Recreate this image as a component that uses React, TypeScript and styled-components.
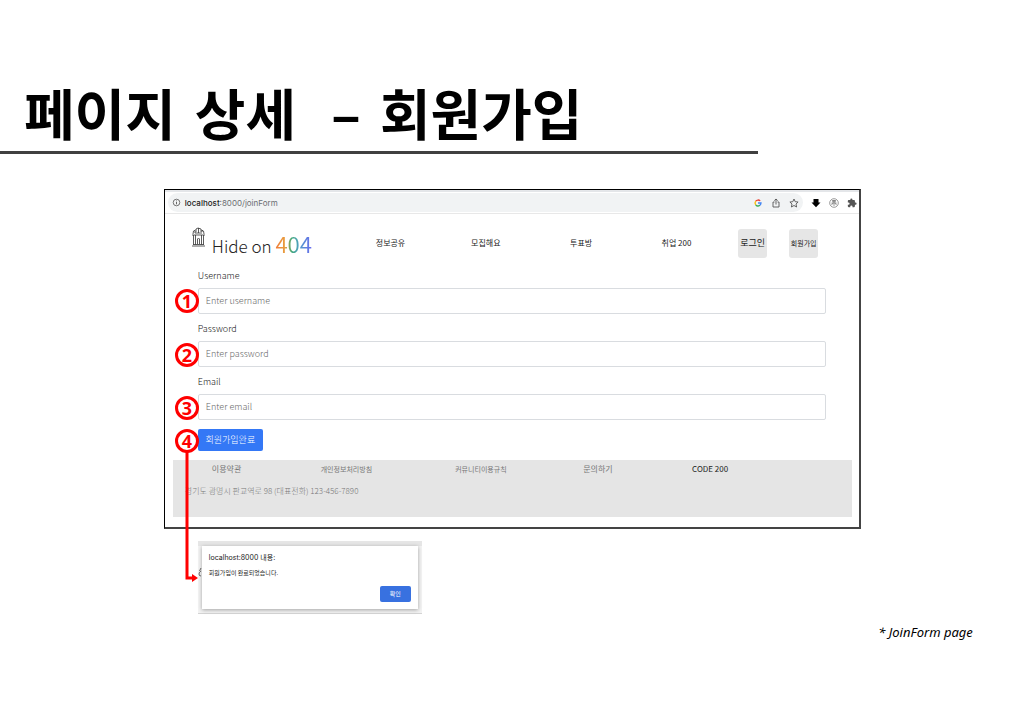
import React from "react";
import styled, { createGlobalStyle } from "styled-components";

const Global = createGlobalStyle`
  *, *::before, *::after { box-sizing: border-box; }
  body { margin: 0; background: #fff; color: #000; font-family: "Noto Sans CJK KR", sans-serif; }
`;

const hand = `"Noto Sans CJK KR", sans-serif`;

const Slide = styled.main`
  padding: 73px 0 84px;
  overflow: hidden;
`;

const Title = styled.h1`
  display: flex;
  gap: 19px;
  margin: 0;
  padding-left: 24px;
  height: 78px;
  font-size: 55px;
  line-height: 76px;
  font-weight: 700;
  white-space: pre;
`;

const Dash = styled.span`
  padding-left: 16px;
`;

const Rule = styled.hr`
  width: 74%;
  height: 3px;
  margin: 0 0 35px;
  border: 0;
  background: #404040;
`;

const Frame = styled.section`
  position: relative;
  min-width: 640px;
  margin: 0 calc(16% - 1px) 0 16%;
  border: 1px solid #000;
  border-right: 2px solid #444;
  border-bottom: 2px solid #444;
`;

const AddressBar = styled.div`
  display: flex;
  align-items: center;
  gap: 8px;
  height: 24px;
  padding: 0 2px 0 3px;
  border-top: 2px solid #e4e6e9;
  border-bottom: 1px solid #e8e8e8;
`;

const Address = styled.div`
  flex: 1;
  display: flex;
  align-items: center;
  gap: 4px;
  height: 19px;
  padding: 0 4px;
  border-radius: 10px;
  background: #f1f3f4;
  color: #6b6e72;
  font: 8px/12px Inter, sans-serif;
  b { color: #222; font-weight: 500; }
`;

const AddressText = styled.span`
  flex: 1;
`;

const ToolIcons = styled.span`
  display: flex;
  align-items: center;
  gap: 8px;
`;

const Icon = styled.svg`
  display: block;
  flex: none;
`;

const Nav = styled.nav`
  display: flex;
  align-items: center;
  height: 56px;
  padding: 2px 41px 0 26px;
`;

const Logo = styled.a`
  display: flex;
  align-items: flex-start;
  gap: 6px;
  flex: 0 0 152px;
  color: #222;
  text-decoration: none;
  font: 300 17px/26px ${hand};
  white-space: nowrap;
`;

const LogoText = styled.span`
  padding-top: 3px;
`;

const Rainbow = styled.span`
  font-size: 22px;
  font-weight: 400;
  background: linear-gradient(90deg, #f07838, #e8a040 28%, #40a878 45%, #50a0c8 65%, #6a68f0);
  -webkit-background-clip: text;
  background-clip: text;
  color: transparent;
`;

const NavLinks = styled.div`
  flex: 1;
  display: grid;
  grid-template-columns: repeat(4, 1fr);
`;

const NavLink = styled.a`
  color: #222;
  font: 8px/12px ${hand};
  text-align: center;
  text-decoration: none;
`;

const NavButtons = styled.div`
  display: flex;
  gap: 22px;
  padding-left: 14px;
`;

const NavButton = styled.button<{ $small?: boolean }>`
  width: 29px;
  height: 29px;
  padding: 0;
  border: 0;
  border-radius: 3px;
  background: #e6e6e6;
  color: #222;
  font: ${(p) => (p.$small ? 7 : 9)}px/12px ${hand};
  white-space: nowrap;
`;

const Form = styled.form`
  padding: 0 33px;
`;

const Field = styled.div`
  position: relative;
  height: 53px;
`;

const Label = styled.label`
  display: block;
  height: 18px;
  color: #111;
  font: 300 9px/12px ${hand};
`;

const Input = styled.input`
  display: block;
  width: 100%;
  height: 26px;
  padding: 0 7px 2px;
  border: 1px solid #d9dce0;
  border-radius: 2px;
  background: #fff;
  font: 300 9px/12px ${hand};
  &::placeholder { color: #666; opacity: 1; }
`;

const SubmitRow = styled.div`
  position: relative;
  height: 31px;
`;

const Submit = styled.button`
  display: block;
  width: 65px;
  height: 22px;
  padding: 0;
  border: 0;
  border-radius: 2px;
  background: #3478f6;
  color: #fff;
  font: 300 9px/12px ${hand};
`;

const Marker = styled.span<{ $top: number }>`
  position: absolute;
  z-index: 2;
  left: -23px;
  top: ${(p) => p.$top}px;
  width: 24px;
  height: 24px;
  border: 3px solid #f00;
  border-radius: 50%;
  background: #fff;
  color: #f00;
  font: 700 18px/18px "Noto Sans", sans-serif;
  text-align: center;
`;

const Connector = styled.svg`
  position: absolute;
  z-index: 1;
  left: -14px;
  top: 22px;
`;

const Footer = styled.footer`
  height: 57px;
  margin: 0 7px 10px 8px;
  padding: 3px 0 0 12px;
  background: #e5e5e5;
  color: #777;
`;

const FooterLinks = styled.div`
  display: grid;
  grid-template-columns: 17% 21% 20% 17% 1fr;
  height: 22px;
  padding-left: 27px;
`;

const FooterLink = styled.a<{ $small?: boolean; $dark?: boolean }>`
  color: ${(p) => (p.$dark ? "#222" : "#777")};
  font: ${(p) => (p.$small ? 7 : 8)}px/12px ${hand};
  text-decoration: none;
`;

const Contact = styled.address`
  font: 300 8px/12px ${hand};
`;

const DialogArea = styled.div`
  width: 224px;
  margin: 12px 0 0 calc(16% + 34px);
  padding: 5px 4px 4px;
  border-bottom: 1px solid #d4d4d4;
  background: linear-gradient(#e6e6e6 0 5px, #f3f3f3 5px);
`;

const Dialog = styled.section`
  display: flex;
  flex-direction: column;
  height: 63px;
  padding: 6px 7px 7px;
  background: #fff;
  box-shadow: 0 1px 4px #0005;
`;

const DialogTitle = styled.h2`
  margin: 0 0 3px;
  color: #222;
  font: 400 7px/12px Inter, "Noto Sans CJK KR", sans-serif;
`;

const DialogText = styled.p`
  margin: 0;
  color: #222;
  font: 6px/12px "Noto Sans CJK KR", sans-serif;
`;

const Confirm = styled.button`
  align-self: flex-end;
  width: 31px;
  height: 16px;
  margin-top: auto;
  padding: 0;
  border: 0;
  border-radius: 2px;
  background: #3871e0;
  color: #fff;
  font: 6px/12px "Noto Sans CJK KR", sans-serif;
`;

const Note = styled.p`
  margin: 8px 5% 0 0;
  font: italic 13px/20px "Noto Sans", sans-serif;
  text-align: right;
`;

const fields = [
  { id: "username", label: "Username", type: "text", hint: "Enter username", top: 19 },
  { id: "password", label: "Password", type: "password", hint: "Enter password", top: 20 },
  { id: "email", label: "Email", type: "email", hint: "Enter email", top: 20 },
];

export default function App() {
  return (
    <Slide>
      <Global />
      <Title>
        <span>페이지</span>
        <span>상세</span>
        <Dash>–</Dash>
        <span>회원가입</span>
      </Title>
      <Rule />
      <Frame>
        <AddressBar>
          <Address>
            <Icon width="9" height="9" viewBox="0 0 9 9" fill="none" stroke="#555">
              <circle cx="4.5" cy="4.5" r="3.3" strokeWidth=".8" />
              <path d="M4.5 4v2.3M4.5 2.5v.8" strokeWidth=".9" />
            </Icon>
            <AddressText><b>localhost</b>:8000/joinForm</AddressText>
            <ToolIcons>
              <Icon width="10" height="10" viewBox="0 0 10 10" fill="none" strokeWidth="1.3">
                <path d="M2.700 3.200A3 3 0 0 1 7.200 2.900" stroke="#ea4335" />
                <path d="M2.700 3.200a3 3 0 0 0 0 3.600" stroke="#fbbc05" />
                <path d="M2.700 6.800a3 3 0 0 0 4.200.4" stroke="#34a853" />
                <path d="M6.900 7.200A3 3 0 0 0 8 5H5" stroke="#4285f4" />
              </Icon>
              <Icon width="10" height="10" viewBox="0 0 10 10" fill="none" stroke="#555" strokeWidth=".9">
                <path d="M3.500 4H2v5h6V4H6.500M5 6.500V1M3.300 2.600 5 1l1.700 1.600" />
              </Icon>
              <Icon width="10" height="10" viewBox="0 0 10 10" fill="none" stroke="#555" strokeWidth=".9">
                <path d="m5 1 1.200 2.700 2.900.3L7 6l.6 3L5 7.500 2.400 9 3 6 .9 4l2.900-.3z" />
              </Icon>
            </ToolIcons>
          </Address>
          <ToolIcons>
            <Icon width="10" height="10" viewBox="0 0 10 10"><path d="M2.500 1h5v3.500h2L5 9.300.5 4.500h2z" /></Icon>
            <Icon width="10" height="10" viewBox="0 0 10 10" fill="none" stroke="#555" strokeWidth=".6">
              <circle cx="5" cy="5" r="4.300" />
              <path d="M3 2.500h4M2.500 5h5M3 3.700h4M5 2v6M3.500 5 2.700 7M6.500 5l.8 2" />
            </Icon>
            <Icon width="10" height="10" viewBox="0 0 24 24" fill="#555">
              <path d="M20.500 11H19V7a2 2 0 0 0-2-2h-4V3.500a2.500 2.500 0 0 0-5 0V5H4a2 2 0 0 0-2 2v3.800h1.500a2.700 2.700 0 0 1 0 5.400H2V20a2 2 0 0 0 2 2h3.800v-1.500a2.700 2.700 0 0 1 5.400 0V22H17a2 2 0 0 0 2-2v-4h1.500a2.500 2.500 0 0 0 0-5z" />
            </Icon>
          </ToolIcons>
        </AddressBar>
        <Nav>
          <Logo href="#">
            <Icon width="15" height="20" viewBox="0 0 15 20" fill="none" stroke="#333" strokeWidth=".8">
              <path d="M1 19h13M2 17.500h11M1 8h13M2.500 8v9.500M4.500 8v9.500M10.500 8v9.500M12.500 8v9.500M6.500 17v-5q1-2 2 0v5M2 7 2.500 4l2-1M13 7l-.5-3-2-1M4 6h7M5 5V2l2-1 3 1v3M7.500 1v5M3 5h2M10 4h2" />
            </Icon>
            <LogoText>Hide on <Rainbow>404</Rainbow></LogoText>
          </Logo>
          <NavLinks>
            <NavLink href="#">정보공유</NavLink>
            <NavLink href="#">모집해요</NavLink>
            <NavLink href="#">투표방</NavLink>
            <NavLink href="#">취업 200</NavLink>
          </NavLinks>
          <NavButtons>
            <NavButton>로그인</NavButton>
            <NavButton $small>회원가입</NavButton>
          </NavButtons>
        </Nav>
        <Form onSubmit={(e) => e.preventDefault()}>
          {fields.map((f, i) => (
            <Field key={f.id}>
              <Label htmlFor={f.id}>{f.label}</Label>
              <Input id={f.id} type={f.type} placeholder={f.hint} />
              <Marker $top={f.top}>{i + 1}</Marker>
            </Field>
          ))}
          <SubmitRow>
            <Submit type="submit">회원가입완료</Submit>
            <Marker $top={0}>4</Marker>
            <Connector width="20" height="132" viewBox="0 0 20 132" fill="none">
              <path d="M3 0V127H9" stroke="#f00" strokeWidth="3" />
              <path d="M8 123v8l6-4z" fill="#f00" />
              <path d="M17 117l-1.500 3M17 120q-2 1-2 3t2 2" stroke="#444" strokeWidth=".8" />
            </Connector>
          </SubmitRow>
        </Form>
        <Footer>
          <FooterLinks>
            <FooterLink href="#">이용약관</FooterLink>
            <FooterLink href="#" $small>개인정보처리방침</FooterLink>
            <FooterLink href="#" $small>커뮤니티이용규칙</FooterLink>
            <FooterLink href="#">문의하기</FooterLink>
            <FooterLink href="#" $dark>CODE 200</FooterLink>
          </FooterLinks>
          <Contact>경기도 광명시 판교역로 98 (대표전화) 123-456-7890</Contact>
        </Footer>
      </Frame>
      <DialogArea>
        <Dialog role="dialog" aria-labelledby="dialog-title">
          <DialogTitle id="dialog-title">localhost:8000 내용:</DialogTitle>
          <DialogText>회원가입이 완료되었습니다.</DialogText>
          <Confirm>확인</Confirm>
        </Dialog>
      </DialogArea>
      <Note>* JoinForm page</Note>
    </Slide>
  );
}
